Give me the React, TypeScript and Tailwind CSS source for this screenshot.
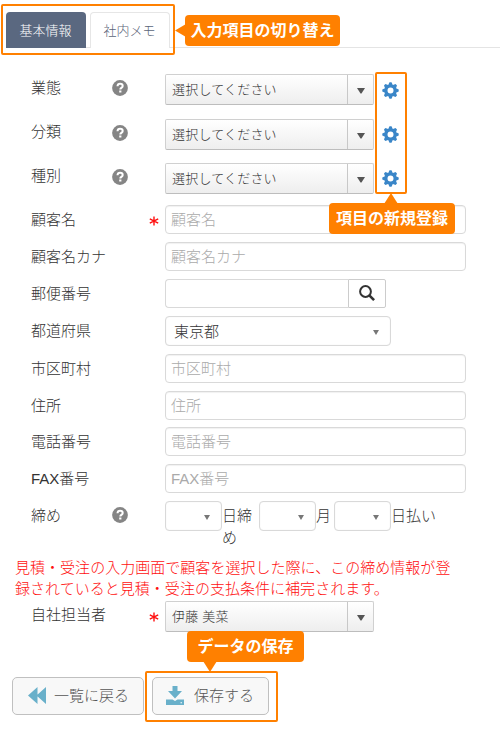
import React from "react";

const TEETH = [0, 45, 90, 135, 180, 225, 270, 315];

function Help() {
  return (
    <svg width="16" height="16" viewBox="0 0 16 16">
      <circle cx="8" cy="8" r="7.9" fill="#858585" />
      <path d="M5.500 6.200C5.600 4.600 6.600 3.800 8.100 3.800c1.400 0 2.600.8 2.600 2.200 0 1.900-2.400 1.900-2.400 3.400" fill="none" stroke="#fff" strokeWidth="2" />
      <rect x="7.200" y="10.500" width="2.200" height="2" fill="#fff" />
    </svg>
  );
}

function Gear() {
  return (
    <svg width="17" height="17" viewBox="-8.5 -8.5 17 17" className="ml-2" fill="#3a86c8">
      <circle r="4.500" fill="none" stroke="#3a86c8" strokeWidth="3" />
      {TEETH.map((angle) => (
        <path key={angle} d="M-2.500-5L-1-8.200h2L2.500-5z" transform={`rotate(${angle})`} />
      ))}
    </svg>
  );
}

type RowProps = {
  label: string;
  h: string;
  labelTop?: string;
  help?: boolean;
  required?: boolean;
  children: React.ReactNode;
};

function Row({ label, h, labelTop = "mt-[3px]", help, required, children }: RowProps) {
  return (
    <div className={`grid shrink-0 grid-cols-[81px_37px_16px_1fr] items-start pl-[31px] ${h}`}>
      <div className={`whitespace-nowrap leading-6 ${labelTop}`}>{label}</div>
      <div className="mt-[6px]">{help && <Help />}</div>
      <div className="mt-[6px] flex h-5 items-center">
        {required && (
          <svg width="10" height="10" viewBox="0 0 10 10" stroke="#ff1010" strokeWidth="1.400">
            <path d="M5 .5v9M.8 2.800l8.400 4.400M9.200 2.800l-8.400 4.400" />
          </svg>
        )}
      </div>
      <div className="flex items-start">{children}</div>
    </div>
  );
}

function Combo({ text }: { text: string }) {
  return (
    <div className="flex h-[31px] w-[209px] rounded-[2px] border border-[#d0d0d0] border-b-[#bdbdbd] bg-gradient-to-b from-white to-[#eeeeee] text-[13px] tracking-[0.2px] text-[#333]">
      <div className="flex flex-1 items-center pl-[6px]">{text}</div>
      <div className="flex w-[26px] items-center justify-center border-l border-[#c8c8c8] pt-[2px]">
        <svg width="8" height="6" viewBox="0 0 8 6"><path d="M0 0h8L4.500 5.500h-1z" fill="#555" /></svg>
      </div>
    </div>
  );
}

function Input({ text }: { text: string }) {
  return (
    <div className="flex h-[29px] w-[301px] items-center rounded-[4px] border border-[#d9d9d9] bg-white pl-[5px] pt-px text-[#aaa] shadow-[inset_0_1px_1px_#f1f1f1]">
      {text}
    </div>
  );
}

function Select({ w, text }: { w: string; text?: string }) {
  return (
    <div className={`flex h-[30px] shrink-0 items-center justify-between rounded-[4px] border border-[#d9d9d9] bg-white pl-2 pr-[11px] pt-0.5 shadow-[inset_0_0_1px_#ddd] ${w}`}>
      <span>{text}</span>
      <svg width="6" height="5" viewBox="0 0 6 5"><path d="M0 0h6L3 5z" fill="#777" /></svg>
    </div>
  );
}

function Callout({ text, pos }: { text: string; pos: string }) {
  return (
    <div className={`absolute flex h-[31px] items-center justify-center whitespace-nowrap rounded-[4px] bg-[#ff8000] text-[16px] font-bold text-white ${pos}`}>
      {text}
    </div>
  );
}

export default function App() {
  return (
    <div className="relative flex h-[730px] w-[500px] flex-col overflow-hidden bg-white font-['Liberation_Sans','Noto_Sans_CJK_JP',sans-serif] text-[15px] font-light text-[#333]">
      <nav className="ml-[6px] mt-[12px] flex h-[36px] shrink-0 gap-1 border-b border-[#e4e4e4] text-[13px]">
        <div className="flex h-9 w-20 items-center justify-center rounded-t-[4px] bg-[#5a6880] pr-px pt-px text-white">基本情報</div>
        <div className="flex h-9 w-20 items-center justify-center rounded-t-[4px] border border-b-0 border-[#e6e6e6] bg-white pr-px text-[#5a6478]">社内メモ</div>
      </nav>

      <main className="mt-[26px] flex flex-col">
        <Row label="業態" h="h-[45px]" labelTop="mt-[2px]" help><Combo text="選択してください" /><div className="mt-2"><Gear /></div></Row>
        <Row label="分類" h="h-[44px]" labelTop="mt-px" help><Combo text="選択してください" /><div className="mt-[7px]"><Gear /></div></Row>
        <Row label="種別" h="h-[42px]" labelTop="mt-px" help><Combo text="選択してください" /><div className="mt-[7px]"><Gear /></div></Row>
        <Row label="顧客名" h="h-[37px]" required><Input text="顧客名" /></Row>
        <Row label="顧客名カナ" h="h-[37px]"><Input text="顧客名カナ" /></Row>
        <Row label="郵便番号" h="h-[37px]">
          <div className="h-[29px] w-[183px] rounded-l-[4px] border border-r-0 border-[#d9d9d9]" />
          <div className="flex h-[29px] w-[38px] items-center justify-center rounded-r-[2px] border border-[#ccc] pb-0.5">
            <svg width="16" height="16" viewBox="0 0 16 16" fill="none" stroke="#333"><circle cx="6.500" cy="6.500" r="5.400" strokeWidth="2" /><path d="M10.300 10.300l4.800 4.800" strokeWidth="2.600" /></svg>
          </div>
        </Row>
        <Row label="都道府県" h="h-[38px]"><Select w="w-[226px]" text="東京都" /></Row>
        <Row label="市区町村" h="h-[37px]"><Input text="市区町村" /></Row>
        <Row label="住所" h="h-[36px]"><Input text="住所" /></Row>
        <Row label="電話番号" h="h-[37px]"><Input text="電話番号" /></Row>
        <Row label="FAX番号" h="h-[37px]"><Input text="FAX番号" /></Row>
        <Row label="締め" h="h-[56px]" help>
          <Select w="w-[57px]" />
          <div className="mt-1 w-[37px] leading-[22px]">日締め</div>
          <Select w="w-[57px]" />
          <div className="mt-1 w-[18px] leading-[22px]">月</div>
          <Select w="w-[57px]" />
          <div className="mt-1 whitespace-nowrap leading-[22px]">日払い</div>
        </Row>
        <p className="mb-[2px] ml-[15px] w-[440px] leading-[21px] tracking-[0.03px] text-[#ff1010]">
          見積・受注の入力画面で顧客を選択した際に、この締め情報が登録されていると見積・受注の支払条件に補完されます。
        </p>
        <Row label="自社担当者" h="h-[76px]" labelTop="mt-[2px]" required><Combo text="伊藤 美菜" /></Row>
      </main>

      <footer className="flex gap-2 pl-3 text-[#555]">
        <button className="flex h-[38px] w-[132px] items-center rounded-[5px] border border-[#c0c0c0] bg-[#f8f8f8] pl-[15px]">
          <svg width="18" height="17" viewBox="0 0 18 17" fill="#69b0ca" className="-mt-px"><path d="M9.500 0v17L0 8.500zM18 0v17L8.500 8.500z" /></svg>
          <span className="ml-2">一覧に戻る</span>
        </button>
        <button className="flex h-[38px] w-[117px] items-center rounded-[5px] border border-[#c0c0c0] bg-[#f8f8f8] pl-[13px]">
          <svg width="18" height="19" viewBox="0 0 18 19" fill="#69b0ca" className="-mt-0.5"><path d="M6.500 0h5v5H16l-7 7.500L2 5h4.500zM0 13.500h6.500L9 15l2.500-1.500H18V19H0z" /><path d="M14.500 16.300h1.500v1h-1.500z" fill="#fff" /></svg>
          <span className="ml-[10px]">保存する</span>
        </button>
      </footer>

      <div className="absolute left-px top-1 h-[51px] w-[174px] rounded-[2px] border-2 border-[#ff8000]" />
      <Callout text="入力項目の切り替え" pos="left-[185px] top-[15px] w-[155px]" />
      <svg className="absolute left-[175px] top-[24px]" width="11" height="13"><path d="M0 6.500L11 0v13z" fill="#ff8000" /></svg>
      <div className="absolute left-[375px] top-[72px] h-[122px] w-[32px] rounded-[2px] border-2 border-[#ff8000]" />
      <Callout text="項目の新規登録" pos="left-[329px] top-[203px] w-[126px]" />
      <svg className="absolute left-[384px] top-[193px]" width="14" height="11"><path d="M7 0l7 11H0z" fill="#ff8000" /></svg>
      <div className="absolute left-[145px] top-[671px] h-[51px] w-[133px] rounded-[2px] border-2 border-[#ff8000]" />
      <Callout text="データの保存" pos="left-[187px] top-[631px] w-[117px]" />
      <svg className="absolute left-[203px] top-[661px]" width="14" height="11"><path d="M0 0h14L7 11z" fill="#ff8000" /></svg>
    </div>
  );
}
